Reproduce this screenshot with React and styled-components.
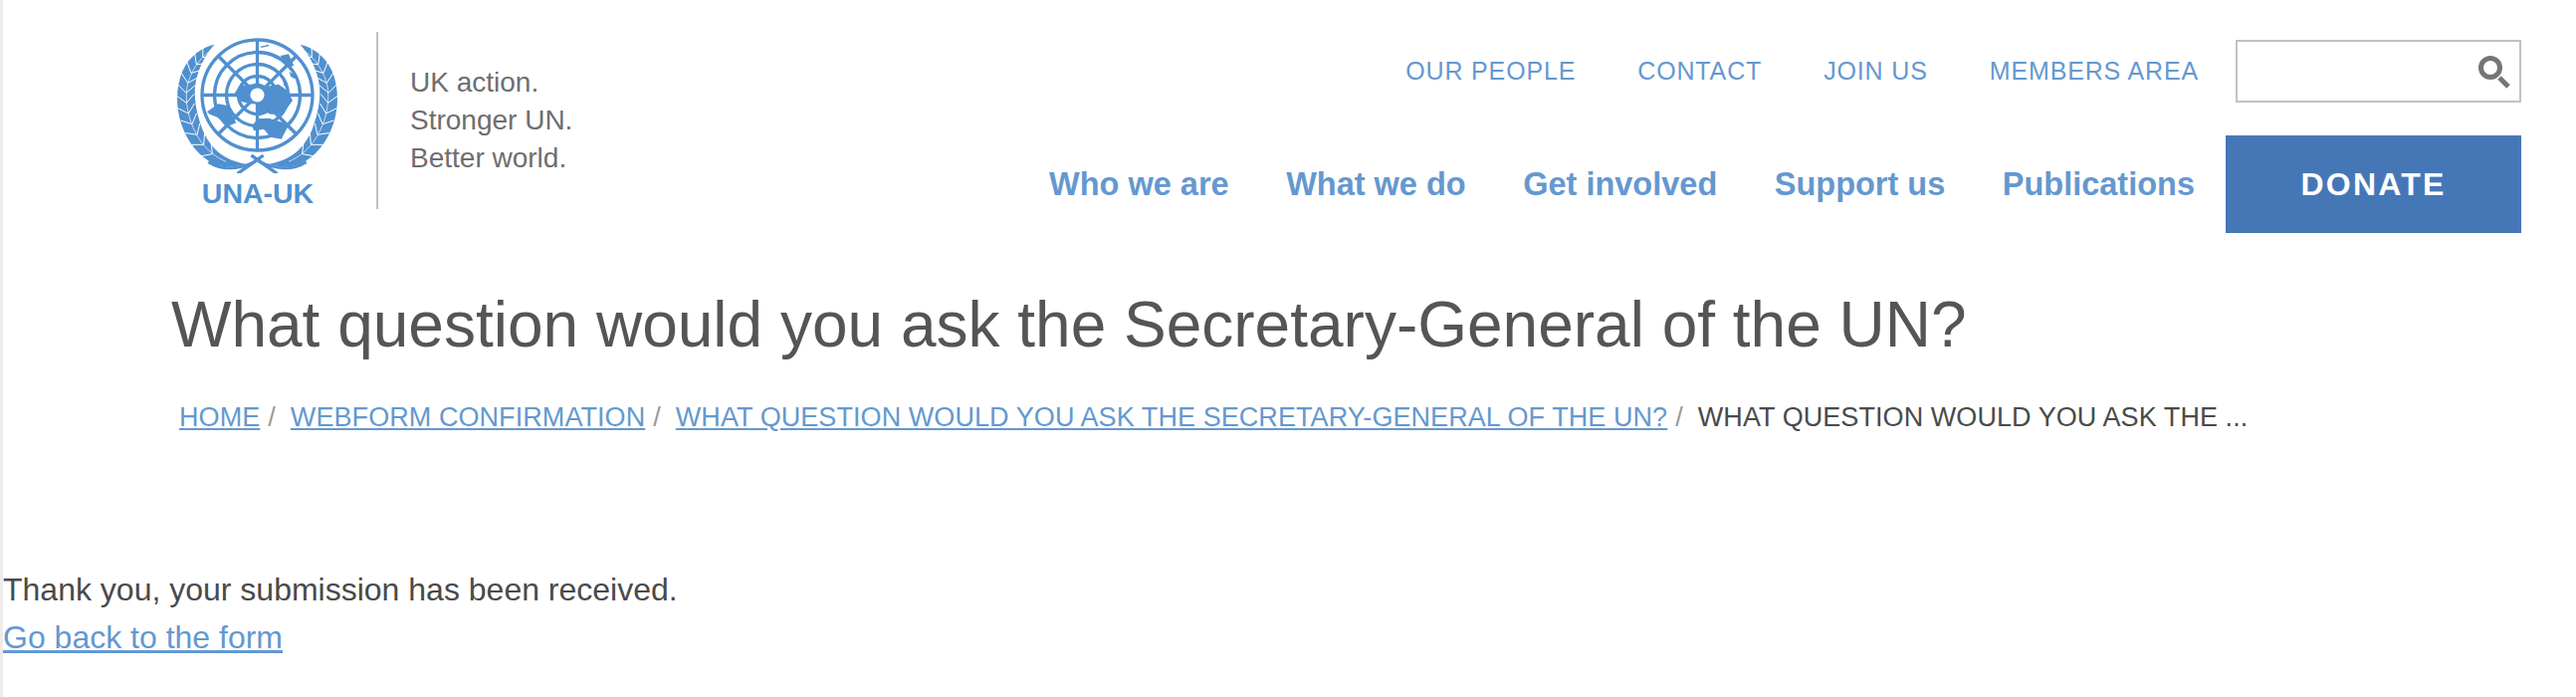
import React from "react";
import styled, { createGlobalStyle } from "styled-components";

const GlobalStyle = createGlobalStyle`
  body {
    margin: 0;
    background: #fff;
    font-family: "Liberation Sans", Arial, sans-serif;
    color: #4a4a4a;
  }
`;

const BLUE = "#5090cf";
const LINK = "#6498cf";

const topLinks = ["OUR PEOPLE", "CONTACT", "JOIN US", "MEMBERS AREA"];
const mainLinks = ["Who we are", "What we do", "Get involved", "Support us", "Publications"];
const crumbs = [
  "HOME",
  "WEBFORM CONFIRMATION",
  "WHAT QUESTION WOULD YOU ASK THE SECRETARY-GENERAL OF THE UN?",
];

// white cuts between the laurel leaves, [x, y, tx, ty]: a point on the stem and the way up the branch
const cuts = [
  [95, 70, 0.75, -0.66], [76, 92, 0.62, -0.78], [60, 118, 0.45, -0.89], [50, 148, 0.25, -0.97],
  [45, 178, 0.05, -1], [46, 208, -0.12, -0.99], [52, 240, -0.28, -0.96], [63, 272, -0.42, -0.91],
  [78, 304, -0.56, -0.83], [98, 334, -0.68, -0.73], [124, 362, -0.8, -0.6],
];

const Wreath = () => (
  <g transform="translate(-6 -4) scale(.3333)">
    <path
      fill={BLUE}
      d="M130 32C95 40 55 65 35 110C15 155 12 215 30 270C48 325 85 372 130 392C160 404 195 402 225 392C205 388 185 384 165 372C135 356 110 325 95 290C80 250 68 205 72 160C76 115 100 65 130 32Z"
    />
    <g fill="none" stroke="#fff" strokeWidth="3">
      <path d="M118 50C85 75 55 115 47 165C41 220 58 280 90 325C110 352 135 372 165 385" strokeWidth="2" />
      {cuts.map(([x, y, tx, ty], i) => (
        <path key={i} d={`M${x} ${y}L${x + 24 * tx - 26 * -ty} ${y + 24 * ty - 26 * tx}`} />
      ))}
      {cuts.map(([x, y, tx, ty], i) => (
        <path key={i} d={`M${x} ${y}L${x + 24 * tx + 26 * -ty} ${y + 24 * ty + 26 * tx}`} />
      ))}
    </g>
    <g fill="none" stroke={BLUE}>
      <path d="M112 386Q172 424 256 384" strokeWidth="9" />
      <path d="M200 421L278 366" strokeWidth="10" />
    </g>
  </g>
);

const Emblem = () => (
  <svg width="162" height="136" viewBox="0 0 162 136">
    <Wreath />
    <g transform="matrix(-1 0 0 1 161 0)">
      <Wreath />
    </g>
    <g fill="none" stroke={BLUE} strokeWidth="3.3">
      <circle cx="80.5" cy="57.5" r="55.5" />
      <circle cx="80.5" cy="57.5" r="43" />
      <circle cx="80.5" cy="57.5" r="31" />
      <circle cx="80.5" cy="57.5" r="19" />
      <path d="M80.5 2V113M25 57.5H136M41 18L120 97M120 18L41 97" />
    </g>
    {/* land, drawn in 3x coordinates */}
    <g transform="translate(22 -2) scale(.3333)" fill={BLUE}>
      <path d="M105 176L122 150L150 147L178 142L205 152L240 146L266 165L282 195L262 222L250 236L215 236L196 226L182 242L176 206L150 204L128 198Z" />
      <path d="M24 229L58 205L86 210L100 240L112 262L86 273L56 246L32 236Z" />
      <path d="M160 272L176 250L210 248L256 262L268 272L248 311L216 305L195 281L165 286Z" />
      <path d="M245 60L270 55L286 90L262 96L255 78Z" />
      <path d="M185 32L210 26L211 30L188 36ZM272 108L296 122L288 130L276 122ZM252 132L262 136L268 160L256 150Z" />
    </g>
    <circle cx="80.5" cy="57.5" r="7" fill="#fff" />
  </svg>
);

const SearchIcon = () => (
  <svg width="34" height="36" viewBox="0 0 34 36">
    <circle cx="14" cy="14" r="9.5" fill="none" stroke="#767676" strokeWidth="5" />
    <path d="M23 24L32 33" stroke="#767676" strokeWidth="5" />
  </svg>
);

const Page = styled.div`
  min-height: 700px;
  box-sizing: border-box;
  border-left: 3px solid #ececec;
`;

const Header = styled.header`
  display: flex;
  justify-content: space-between;
  padding: 32px 55px 0 175px;
`;

const Brand = styled.div`
  display: flex;
  height: 178px;
`;

const LogoMark = styled.div`
  display: flex;
  flex-direction: column;
  align-items: center;
  width: 162px;
  padding-top: 6px;
`;

const LogoName = styled.div`
  margin-top: 6px;
  font-size: 28.5px;
  line-height: 28px;
  font-weight: 700;
  color: ${BLUE};
`;

const Tagline = styled.div`
  margin-left: 38px;
  padding: 32px 0 0 32px;
  border-left: 2px solid #c2c2c2;
  font-size: 28px;
  line-height: 38px;
  color: #6e6e6e;
`;

const RightCol = styled.div`
  display: flex;
  flex-direction: column;
  align-items: flex-end;
  margin-top: 8px;
`;

const TopRow = styled.div`
  display: flex;
  align-items: center;
  height: 63px;
`;

const TopNav = styled.nav`
  display: flex;
  gap: 62px;
  margin-right: 37px;
`;

const TopLink = styled.a`
  font-size: 25px;
  letter-spacing: 0.85px;
  color: ${LINK};
`;

const SearchBox = styled.div`
  display: flex;
  align-items: center;
  justify-content: flex-end;
  box-sizing: border-box;
  width: 287px;
  height: 63px;
  padding-right: 9px;
  border: 2px solid #c2c2c2;
`;

const MainRow = styled.div`
  display: flex;
  align-items: center;
  margin-top: 33px;
`;

const MainNav = styled.nav`
  display: flex;
  gap: 57.5px;
  margin-right: 31px;
`;

const MainLink = styled.a`
  font-size: 32.5px;
  font-weight: 700;
  color: ${LINK};
`;

const Donate = styled.button`
  width: 297px;
  height: 98px;
  border: 0;
  background: #4577b7;
  color: #fff;
  font-family: inherit;
  font-size: 32px;
  font-weight: 700;
  letter-spacing: 2.2px;
`;

const Title = styled.h1`
  margin: 54px 0 0 169px;
  font-size: 64px;
  line-height: 76px;
  font-weight: 400;
  color: #555;
`;

const Breadcrumb = styled.div`
  display: flex;
  margin: 39px 0 0 177px;
  font-size: 27px;
  line-height: 32px;
  letter-spacing: 0.07px;
`;

const Crumb = styled.a`
  color: ${LINK};
  text-decoration: underline;
`;

const Sep = styled.span`
  margin: 0 15px 0 8px;
  color: #999;
`;

const Current = styled.span`
  color: #4a4a4a;
`;

const Message = styled.div`
  margin-top: 133px;
  font-size: 32px;
  line-height: 48px;
`;

const BackLink = styled.a`
  display: block;
  color: ${LINK};
  text-decoration: underline;
`;

export default function App() {
  return (
    <Page>
      <GlobalStyle />
      <Header>
        <Brand>
          <LogoMark>
            <Emblem />
            <LogoName>UNA-UK</LogoName>
          </LogoMark>
          <Tagline>
            UK action.
            <br />
            Stronger UN.
            <br />
            Better world.
          </Tagline>
        </Brand>
        <RightCol>
          <TopRow>
            <TopNav>
              {topLinks.map((t) => (
                <TopLink key={t}>{t}</TopLink>
              ))}
            </TopNav>
            <SearchBox>
              <SearchIcon />
            </SearchBox>
          </TopRow>
          <MainRow>
            <MainNav>
              {mainLinks.map((t) => (
                <MainLink key={t}>{t}</MainLink>
              ))}
            </MainNav>
            <Donate>DONATE</Donate>
          </MainRow>
        </RightCol>
      </Header>
      <Title>What question would you ask the Secretary-General of the UN?</Title>
      <Breadcrumb>
        {crumbs.map((c) => (
          <React.Fragment key={c}>
            <Crumb>{c}</Crumb>
            <Sep>/</Sep>
          </React.Fragment>
        ))}
        <Current>WHAT QUESTION WOULD YOU ASK THE ...</Current>
      </Breadcrumb>
      <Message>
        Thank you, your submission has been received.
        <BackLink>Go back to the form</BackLink>
      </Message>
    </Page>
  );
}
